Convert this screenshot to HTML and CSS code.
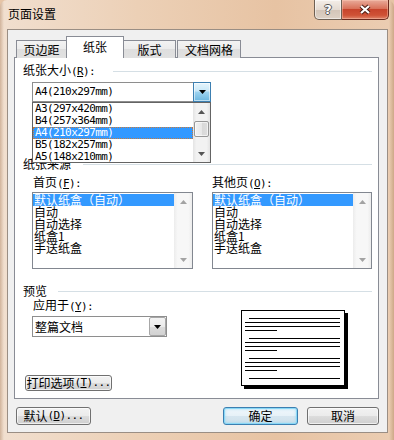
FILE: index.html
```html
<!DOCTYPE html>
<html lang="zh-CN">
<head>
<meta charset="utf-8">
<title>页面设置</title>
<link rel="stylesheet" href="styles.css">
</head>
<body>
<div class="window">
  <div class="titlebar">
    <div class="title">页面设置</div>
    <div class="caption">
      <div class="cap help"><span class="qmark">?</span></div>
      <div class="cap close">
        <svg width="14" height="11" viewBox="0 0 14 11"><path d="M3 2 L11 9 M11 2 L3 9" stroke="#4a1d14" stroke-width="4.2" fill="none"/><path d="M3 2 L11 9 M11 2 L3 9" stroke="#ffffff" stroke-width="2.2" fill="none"/></svg>
      </div>
    </div>
  </div>
  <div class="client">
    <div class="tabs">
      <div class="tab t1">页边距</div>
      <div class="tab t2 active">纸张</div>
      <div class="tab t3">版式</div>
      <div class="tab t4">文档网格</div>
    </div>
    <div class="panel">
      <div class="ghead"><span class="lab lab-size">纸张大小<span class="h">(<u>R</u>):</span></span><i class="rule"></i></div>
      <div class="size-area">
        <div class="combo">
          <div class="combo-text h">A4(210x297mm)</div>
          <div class="combo-btn hot"><svg width="7" height="4" viewBox="0 0 7 4"><polygon points="0,0 7,0 3.5,4" fill="#000"/></svg></div>
        </div>
        <div class="droplist">
          <div class="items">
            <div class="item h">A3(297x420mm)</div>
            <div class="item h">B4(257x364mm)</div>
            <div class="item h sel focus">A4(210x297mm)</div>
            <div class="item h">B5(182x257mm)</div>
            <div class="item h">A5(148x210mm)</div>
          </div>
          <div class="sb">
            <div class="sb-btn"><svg width="7" height="4" viewBox="0 0 7 4"><polygon points="0,4 7,4 3.5,0" fill="#555"/></svg></div>
            <div class="thumb"></div>
            <div class="sb-fill"></div>
            <div class="sb-btn"><svg width="7" height="4" viewBox="0 0 7 4"><polygon points="0,0 7,0 3.5,4" fill="#555"/></svg></div>
          </div>
        </div>
      </div>
      <div class="ghead src-head"><span class="lab lab-src">纸张来源</span><i class="rule"></i></div>
      <div class="trays">
        <div class="tray tray1">
          <div class="tlabel">首页<span class="h">(<u>F</u>):</span></div>
          <div class="listbox">
            <div class="items">
              <div class="item sel">默认纸盒（自动）</div>
              <div class="item">自动</div>
              <div class="item">自动选择</div>
              <div class="item">纸盒1</div>
              <div class="item">手送纸盒</div>
            </div>
            <div class="sb sb-dis">
              <div class="sb-btn"><svg width="7" height="4" viewBox="0 0 7 4"><polygon points="0,4 7,4 3.5,0" fill="#a3a3a3"/></svg></div>
              <div class="sb-fill"></div>
              <div class="sb-btn"><svg width="7" height="4" viewBox="0 0 7 4"><polygon points="0,0 7,0 3.5,4" fill="#a3a3a3"/></svg></div>
            </div>
          </div>
        </div>
        <div class="tray tray2">
          <div class="tlabel">其他页<span class="h">(<u>O</u>):</span></div>
          <div class="listbox">
            <div class="items">
              <div class="item sel">默认纸盒（自动）</div>
              <div class="item">自动</div>
              <div class="item">自动选择</div>
              <div class="item">纸盒1</div>
              <div class="item">手送纸盒</div>
            </div>
            <div class="sb sb-dis">
              <div class="sb-btn"><svg width="7" height="4" viewBox="0 0 7 4"><polygon points="0,4 7,4 3.5,0" fill="#a3a3a3"/></svg></div>
              <div class="sb-fill"></div>
              <div class="sb-btn"><svg width="7" height="4" viewBox="0 0 7 4"><polygon points="0,0 7,0 3.5,4" fill="#a3a3a3"/></svg></div>
            </div>
          </div>
        </div>
      </div>
      <div class="ghead prev-head"><span class="lab lab-prev">预览</span><i class="rule"></i></div>
      <div class="preview-row">
        <div class="apply">
          <div class="alabel">应用于<span class="h">(<u>Y</u>):</span></div>
          <div class="combo combo-apply">
            <div class="combo-text">整篇文档</div>
            <div class="combo-btn plain"><svg width="7" height="4" viewBox="0 0 7 4"><polygon points="0,0 7,0 3.5,4" fill="#000"/></svg></div>
          </div>
          <div class="btn btn-print">打印选项<span class="h">(<u>T</u>)...</span></div>
        </div>
        <div class="page">
          <div class="para"><i class="ln ind"></i><i class="ln"></i><i class="ln"></i><i class="ln short"></i></div>
          <div class="para"><i class="ln ind"></i><i class="ln"></i><i class="ln"></i><i class="ln short"></i></div>
          <div class="para"><i class="ln ind"></i><i class="ln"></i><i class="ln"></i><i class="ln short"></i></div>
          <div class="para"><i class="ln ind"></i></div>
        </div>
      </div>
    </div>
    <div class="footer">
      <div class="btn btn-def">默认<span class="h">(<u>D</u>)...</span></div>
      <div class="btn btn-ok">确定</div>
      <div class="btn btn-cancel">取消</div>
    </div>
  </div>
</div>
</body>
</html>
```

FILE: styles.css
```css
* { box-sizing: border-box; }
html, body { margin: 0; padding: 0; }
body {
  width: 394px;
  height: 440px;
  overflow: hidden;
  font: 12px/12px "Noto Sans CJK SC", "Noto Sans", sans-serif;
  color: #000;
  background: #e6c4a6;
}
.h {
  font-family: "DejaVu Sans Mono", "Liberation Mono", monospace;
  font-size: 11px;
  letter-spacing: -0.6px;
}
u { text-underline-offset: 1px; }

.window {
  width: 394px;
  height: 440px;
  padding: 0 6px 0 7px;
  display: flex;
  flex-direction: column;
  border-radius: 7px 7px 0 0;
  background:
    linear-gradient(90deg, rgba(150,100,60,.35) 0, rgba(150,100,60,0) 4px, rgba(150,100,60,0) 389px, rgba(150,100,60,.35) 394px),
    linear-gradient(90deg, #f1dfcf 0%, #ecd0b6 35%, #e7c3a3 70%, #ebcdb2 100%);
}

/* title bar */
.titlebar {
  height: 29px;
  display: flex;
  align-items: flex-start;
}
.title {
  margin: 8px 0 0 1px;
  line-height: 12px;
  font-size: 12px;
}
.caption {
  margin-left: auto;
  margin-right: -1px;
  display: flex;
}
.cap {
  height: 20px;
  display: flex;
  align-items: center;
  justify-content: center;
}
.help {
  width: 28px;
  border: 1px solid #6e6053;
  border-top: none;
  border-radius: 0 0 0 5px;
  background: linear-gradient(#f4eee8, #e5dbd2 50%, #d3c5b8 51%, #ddd1c5);
  box-shadow: inset 0 0 0 1px rgba(255,255,255,.5);
}
.qmark {
  font: bold 13px/13px "DejaVu Sans", sans-serif;
  color: #fff;
  text-shadow: 1px 0 0 #555, -1px 0 0 #555, 0 1px 0 #555, 0 -1px 0 #555;
}
.close {
  width: 47px;
  border: 1px solid #6b2a1e;
  border-top: none;
  border-left: none;
  border-radius: 0 0 5px 0;
  background: linear-gradient(#e9ab9a, #d9725a 45%, #c7442c 50%, #cf5236 80%, #e0856a);
  box-shadow: inset 0 0 0 1px rgba(255,210,190,.4);
}

/* client */
.client {
  height: 404px;
  border: 1px solid #9a8e84;
  background: #f0f0f0;
}
.tabs {
  margin: 6px 0 0 8px;
  height: 22px;
  display: flex;
  align-items: flex-end;
  position: relative;
  z-index: 1;
}
.tab {
  height: 18px;
  border: 1px solid #898c95;
  border-bottom: none;
  text-align: center;
  line-height: 17px;
  background: linear-gradient(#f3f3f3, #ebebeb 50%, #dedede 50%, #e1e1e1);
}
.t1 { width: 51px; }
.t2 { width: 58px; margin-left: -1px; }
.t3 { width: 53px; margin-left: -1px; }
.t4 { width: 64px; margin-left: 1px; }
.tab.active {
  height: 22px;
  line-height: 19px;
  background: #fff;
  position: relative;
  z-index: 2;
}

.panel {
  margin: -1px 0 0 6px;
  width: 365px;
  height: 342px;
  border: 1px solid #898c95;
  background: #fff;
  padding: 7px 6px 0 8px;
}
.ghead {
  display: flex;
  align-items: center;
  height: 12px;
}
.lab { flex: none; line-height: 12px; white-space: nowrap; }
.lab-size { width: 90px; }
.lab-src { width: 60px; }
.lab-prev { width: 35px; }
.rule {
  flex: 1;
  height: 1px;
  background: #d5dfe5;
}

/* combo boxes */
.size-area {
  margin: 5px 0 0 9px;
  width: 179px;
  height: 20px;
  position: relative;
  z-index: 3;
}
.combo {
  display: flex;
  height: 100%;
  border: 1px solid #8e8e8e;
  background: #fff;
}
.combo-text {
  flex: 1;
  padding-left: 2px;
  line-height: 18px;
  white-space: nowrap;
}
.combo-btn {
  width: 18px;
  display: flex;
  align-items: center;
  justify-content: center;
}
.combo-btn.hot {
  margin: -1px -1px -1px 0;
  border: 1px solid #3c7fb1;
  background: linear-gradient(#e6f5fd, #c9e8f8 45%, #9dd3f0 50%, #6cb7e0);
  box-shadow: inset 0 0 0 1px rgba(255,255,255,.55);
}
.combo-apply {
  margin: 5px 0 0 9px;
  width: 135px;
  height: 21px;
}
.combo-apply .combo-text { line-height: 19px; }
.combo-btn.plain {
  width: 17px;
  border: 1px solid #a7a7a7;
  border-radius: 2px;
  background: linear-gradient(#f3f3f3, #ebebeb 50%, #dcdcdc 50%, #d2d2d2);
}

/* dropdown list (overlay) */
.droplist {
  position: absolute;
  left: 0;
  top: 20px;
  width: 179px;
  height: 61px;
  border: 1px solid #646464;
  background: #fff;
  display: flex;
  overflow: hidden;
}
.items {
  flex: 1;
  min-width: 0;
}
.item {
  height: 12px;
  line-height: 12px;
  padding-left: 2px;
  white-space: nowrap;
}
.item.sel {
  background: #3399ff;
  color: #fff;
}
.item.focus { outline: 1px dotted #c87a3a; outline-offset: -1px; }

.sb {
  width: 17px;
  display: flex;
  flex-direction: column;
  align-items: center;
  background: linear-gradient(90deg, #e4e4e4, #f2f2f2 20%, #f2f2f2 80%, #e4e4e4);
}
.sb-btn {
  width: 100%;
  height: 17px;
  display: flex;
  align-items: center;
  justify-content: center;
  flex: none;
}
.sb-fill { flex: 1; }
.thumb {
  width: 15px;
  height: 16px;
  margin-top: 1px;
  border: 1px solid #979797;
  border-radius: 2px;
  background: linear-gradient(90deg, #f3f3f3, #e8e8e8 50%, #d8d8d8 50%, #dedede);
  box-shadow: inset 0 0 0 1px rgba(255,255,255,.6);
}

/* paper source */
.src-head { margin-top: 56px; }
.trays {
  margin: 6px 0 0 9px;
  display: flex;
  gap: 19px;
}
.tray1 { width: 161px; }
.tray2 { width: 160px; }
.tlabel { height: 12px; line-height: 12px; white-space: nowrap; }
.tray1 .tlabel { padding-left: 1px; }
.listbox {
  margin-top: 4px;
  height: 77px;
  border: 1px solid #828790;
  background: #fff;
  display: flex;
}
.listbox .items { padding-top: 1px; }
.listbox .item { padding-left: 1px; }
.sb-dis {
  width: 18px;
  background: linear-gradient(90deg, #ececec, #f7f7f7 20%, #f7f7f7 80%, #ececec);
}

/* preview */
.prev-head { margin-top: 16px; }
.preview-row { display: flex; }
.apply { width: 200px; flex: none; }
.alabel { margin: 2px 0 0 10px; height: 12px; line-height: 12px; white-space: nowrap; }

.btn {
  height: 18px;
  border: 1px solid #707070;
  border-radius: 3px;
  background: linear-gradient(#f2f2f2, #ebebeb 50%, #dddddd 50%, #cfcfcf);
  box-shadow: inset 0 0 0 1px rgba(255,255,255,.65);
  display: flex;
  align-items: center;
  justify-content: center;
  line-height: 12px;
  white-space: nowrap;
}
.btn-print {
  margin: 38px 0 0 2px;
  width: 87px;
  height: 16px;
}

.page {
  margin: 13px 0 0 18px;
  width: 104px;
  height: 76px;
  border: 1px solid #000;
  box-shadow: 3px 3px 0 #000;
  background: #fff;
  padding-top: 7px;
  display: flex;
  flex-direction: column;
  gap: 7px;
  overflow: hidden;
}
.para {
  display: flex;
  flex-direction: column;
  gap: 3px;
}
.ln {
  display: block;
  height: 1px;
  background: #000;
  margin-left: 3px;
  width: 95px;
}
.ln.ind { margin-left: 7px; width: 91px; }
.ln.short { width: 32px; }

/* footer */
.footer {
  margin: 8px 0 0 8px;
  width: 363px;
  display: flex;
}
.btn-def { width: 75px; }
.btn-ok {
  width: 75px;
  margin-left: auto;
  border-color: #3c7fb1;
  box-shadow: inset 0 0 0 1px #8ad8f6, inset 0 0 3px 1px rgba(120,210,245,.6);
  background: linear-gradient(#f1f7fb, #e6f1f8 50%, #d6e6f0 50%, #cfe0ea);
}
.btn-cancel { width: 72px; margin-left: 9px; }
```
